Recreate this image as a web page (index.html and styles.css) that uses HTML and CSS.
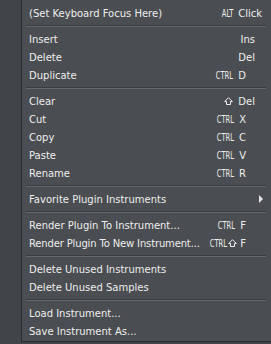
FILE: index.html
```html
<!DOCTYPE html>
<html>
<head>
<meta charset="utf-8">
<link rel="stylesheet" href="styles.css">
</head>
<body>
<div class="page">
  <div class="menu">
    <div class="item"><span class="label">(Set Keyboard Focus Here)</span><span class="key k-far"><span class="mod alt">ALT</span><span class="gap"></span>Click</span></div>
    <div class="sep"></div>
    <div class="item"><span class="label">Insert</span><span class="key k-mid">Ins</span></div>
    <div class="item"><span class="label">Delete</span><span class="key k-mid">Del</span></div>
    <div class="item"><span class="label">Duplicate</span><span class="key k-near"><span class="mod">CTRL</span><span class="gap"></span>D</span></div>
    <div class="sep"></div>
    <div class="item"><span class="label">Clear</span><span class="key k-mid"><svg class="shift" width="9" height="8" viewBox="0 0 9 8"><polygon points="4.5,0.7 8.3,4.5 6.5,4.5 6.5,7.5 2.5,7.5 2.5,4.5 0.7,4.5" fill="none" stroke="#eeeeee" stroke-width="1"/></svg><span class="gap"></span>Del</span></div>
    <div class="item"><span class="label">Cut</span><span class="key k-near"><span class="mod">CTRL</span><span class="gap"></span>X</span></div>
    <div class="item"><span class="label">Copy</span><span class="key k-near"><span class="mod">CTRL</span><span class="gap"></span>C</span></div>
    <div class="item"><span class="label">Paste</span><span class="key k-near"><span class="mod">CTRL</span><span class="gap"></span>V</span></div>
    <div class="item"><span class="label">Rename</span><span class="key k-near"><span class="mod">CTRL</span><span class="gap"></span>R</span></div>
    <div class="sep"></div>
    <div class="item"><span class="label">Favorite Plugin Instruments</span><span class="arrow"></span></div>
    <div class="sep"></div>
    <div class="item"><span class="label">Render Plugin To Instrument...</span><span class="key k-near"><span class="mod">CTRL</span><span class="gap"></span>F</span></div>
    <div class="item"><span class="label narrow">Render Plugin To New Instrument...</span><span class="key k-near"><span class="mod">CTRL</span><svg class="shift tight" width="9" height="8" viewBox="0 0 9 8"><polygon points="4.5,0.7 8.3,4.5 6.5,4.5 6.5,7.5 2.5,7.5 2.5,4.5 0.7,4.5" fill="none" stroke="#eeeeee" stroke-width="1"/></svg><span class="gap small"></span>F</span></div>
    <div class="sep"></div>
    <div class="item"><span class="label">Delete Unused Instruments</span></div>
    <div class="item"><span class="label">Delete Unused Samples</span></div>
    <div class="sep"></div>
    <div class="item"><span class="label">Load Instrument...</span></div>
    <div class="item"><span class="label">Save Instrument As...</span></div>
  </div>
</div>
</body>
</html>
```
FILE: styles.css
```css
html, body {
  margin: 0;
  padding: 0;
  background: #414448;
  width: 271px;
  height: 344px;
  overflow: hidden;
}
.page {
  padding-left: 21px;
}
.menu {
  background: #4a4d51;
  border-left: 1px solid #2a2c2f;
  border-bottom: 1px solid #2a2c2f;
  padding-top: 4px;
  height: 337px;
  font-family: "DejaVu Sans", sans-serif;
  font-size: 10px;
  color: #eeeeee;
}
.item {
  height: 18px;
  display: flex;
  align-items: center;
  padding-left: 7px;
  white-space: nowrap;
}
.label {
  flex: 1;
}
.label.narrow {
  letter-spacing: -0.15px;
}
.key {
  display: flex;
  align-items: center;
}
.k-far { padding-right: 9px; }
.k-mid { padding-right: 16px; }
.k-near { padding-right: 25px; }
.mod {
  display: inline-block;
  font-family: "DejaVu Sans Condensed", "DejaVu Sans", sans-serif;
  font-size: 10px;
  transform: scaleX(0.75);
  transform-origin: right center;
  margin-left: -6px;
}
.mod.alt {
  margin-left: -4px;
}
.gap {
  display: inline-block;
  width: 5px;
}
.gap.small {
  width: 3px;
}
.shift {
  display: block;
}
.shift.tight {
  margin-left: 1px;
}
.arrow {
  width: 0;
  height: 0;
  border-top: 4px solid transparent;
  border-bottom: 4px solid transparent;
  border-left: 4px solid #e8e8e8;
  margin-right: 8px;
}
.sep {
  height: 8px;
  display: flex;
  flex-direction: column;
  justify-content: center;
  margin: 0 5px 0 4px;
}
.sep::before {
  content: "";
  display: block;
  height: 1px;
  background: #3a3d40;
}
.sep::after {
  content: "";
  display: block;
  height: 1px;
  background: #66696c;
}
```
